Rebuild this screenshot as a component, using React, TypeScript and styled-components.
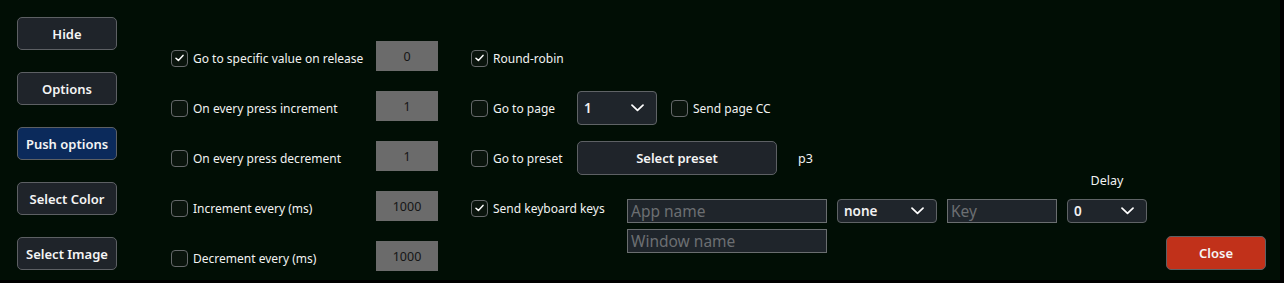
import React from 'react';
import styled, { createGlobalStyle } from 'styled-components';

const Global = createGlobalStyle`
  body {
    margin: 0;
    background: #000;
    font-family: "Noto Sans", "DejaVu Sans", sans-serif;
    color: #f2f2f2;
  }
`;

const Panel = styled.div`
  width: 1280px;
  height: 280px;
  background: #010e05;
  display: flex;
  box-sizing: border-box;
`;

const Sidebar = styled.div`
  display: flex;
  flex-direction: column;
  gap: 22px;
  padding: 17px 0 0 17px;
`;

const Button = styled.button<{ variant?: 'primary' | 'danger'; width?: number; tall?: boolean }>`
  width: ${({ width }) => (width ? width : 100)}px;
  height: ${({ tall }) => (tall ? 34 : 33)}px;
  box-sizing: border-box;
  border-radius: 5px;
  border: 1px solid #5d6064;
  background: ${({ variant }) =>
    variant === 'primary' ? '#0b2a5b' : variant === 'danger' ? '#c1311a' : '#1f242a'};
  color: #f5f5f5;
  font-family: "Noto Sans", sans-serif;
  font-size: 13px;
  font-weight: 600;
  padding: 0;
  cursor: pointer;
`;

const ValueColumn = styled.div`
  display: flex;
  flex-direction: column;
  gap: 16px;
  padding-top: 41px;
  margin-left: 54px;
`;

const Row = styled.div`
  display: flex;
  align-items: center;
  height: 34px;
`;

const CheckItem = styled.label<{ width?: number }>`
  display: flex;
  align-items: center;
  gap: 5px;
  height: 34px;
  width: ${({ width }) => (width ? `${width}px` : 'auto')};
  font-size: 12px;
  white-space: nowrap;
  flex-shrink: 0;
`;

const Box = styled.span`
  width: 15px;
  height: 15px;
  border: 1px solid #65686a;
  border-radius: 4px;
  background: #0a140d;
  display: flex;
  align-items: center;
  justify-content: center;
  flex-shrink: 0;
`;

const ValueBox = styled.div`
  align-self: flex-start;
  width: 62px;
  height: 30px;
  background: #6b6b6b;
  color: #151515;
  font-size: 12.5px;
  display: flex;
  align-items: center;
  justify-content: center;
`;

const MiddleColumn = styled.div`
  display: flex;
  flex-direction: column;
  gap: 16px;
  padding-top: 41px;
  margin-left: 33px;
`;

const Select = styled.div<{ width: number; tall?: boolean }>`
  width: ${({ width }) => width}px;
  height: ${({ tall }) => (tall ? 34 : 24)}px;
  box-sizing: border-box;
  border: 1px solid #5f6366;
  border-radius: 4px;
  background: #1f252b;
  display: flex;
  align-items: center;
  justify-content: space-between;
  padding: 0 12px 0 6px;
  font-size: 13.5px;
  font-weight: 600;
  flex-shrink: 0;
`;

const Spacer = styled.span`
  width: 14px;
`;

const Note = styled.span`
  font-size: 12.5px;
  margin-left: 21px;
`;

const KeysRow = styled.div`
  display: flex;
  align-items: flex-start;
  gap: 10px;
`;

const InputStack = styled.div`
  display: flex;
  flex-direction: column;
  gap: 6px;
  margin-top: 8px;
`;

const TextInput = styled.input<{ w: number }>`
  width: ${({ w }) => w}px;
  height: 24px;
  box-sizing: border-box;
  border: 1px solid #6a6e70;
  background: #1f252b;
  color: #ddd;
  font-family: "Noto Sans", sans-serif;
  font-size: 15.5px;
  padding: 0 3px;
  margin: 0;
  outline: none;
  &::placeholder {
    color: #6c6f72;
  }
`;

const Slot = styled.div`
  margin-top: 8px;
`;

const DelayGroup = styled.div`
  display: flex;
  flex-direction: column;
  align-items: center;
  margin-top: -18px;
`;

const DelayLabel = styled.span`
  font-size: 12.5px;
  line-height: 16px;
  margin-bottom: 10px;
`;

const CloseSlot = styled.div`
  margin-left: auto;
  align-self: flex-end;
  margin-right: 14px;
  margin-bottom: 10px;
`;

const Check = () => (
  <svg width="9" height="8" viewBox="0 0 9 8">
    <path d="M1 4.2 L3.4 6.4 L8 1.4" fill="none" stroke="#fff" strokeWidth="1.5" strokeLinecap="round" strokeLinejoin="round" />
  </svg>
);

const Chevron = () => (
  <svg width="13" height="8" viewBox="0 0 13 8">
    <path d="M1 1.2 L6.5 6.4 L12 1.2" fill="none" stroke="#fff" strokeWidth="1.7" strokeLinecap="round" strokeLinejoin="round" />
  </svg>
);

const Checkbox = ({ label, checked, width }: { label: string; checked?: boolean; width?: number }) => (
  <CheckItem width={width}>
    <Box>{checked && <Check />}</Box>
    {label}
  </CheckItem>
);

const valueRows = [
  { label: 'Go to specific value on release', value: '0', checked: true },
  { label: 'On every press increment', value: '1' },
  { label: 'On every press decrement', value: '1' },
  { label: 'Increment every (ms)', value: '1000' },
  { label: 'Decrement every (ms)', value: '1000' },
];

export default function App() {
  return (
    <>
      <Global />
      <Panel>
        <Sidebar>
          <Button>Hide</Button>
          <Button>Options</Button>
          <Button variant="primary">Push options</Button>
          <Button>Select Color</Button>
          <Button>Select Image</Button>
        </Sidebar>

        <ValueColumn>
          {valueRows.map((r) => (
            <Row key={r.label}>
              <Checkbox label={r.label} checked={r.checked} width={205} />
              <ValueBox>{r.value}</ValueBox>
            </Row>
          ))}
        </ValueColumn>

        <MiddleColumn>
          <Row>
            <Checkbox label="Round-robin" checked />
          </Row>
          <Row>
            <Checkbox label="Go to page" width={106} />
            <Select width={80} tall>
              1 <Chevron />
            </Select>
            <Spacer />
            <Checkbox label="Send page CC" />
          </Row>
          <Row>
            <Checkbox label="Go to preset" width={106} />
            <Button width={200} tall>Select preset</Button>
            <Note>p3</Note>
          </Row>
          <KeysRow>
            <Checkbox label="Send keyboard keys" checked width={146} />
            <InputStack>
              <TextInput w={200} placeholder="App name" />
              <TextInput w={200} placeholder="Window name" />
            </InputStack>
            <Slot>
              <Select width={100}>
                none <Chevron />
              </Select>
            </Slot>
            <Slot>
              <TextInput w={110} placeholder="Key" />
            </Slot>
            <DelayGroup>
              <DelayLabel>Delay</DelayLabel>
              <Select width={80}>
                0 <Chevron />
              </Select>
            </DelayGroup>
          </KeysRow>
        </MiddleColumn>

        <CloseSlot>
          <Button variant="danger" tall>Close</Button>
        </CloseSlot>
      </Panel>
    </>
  );
}
